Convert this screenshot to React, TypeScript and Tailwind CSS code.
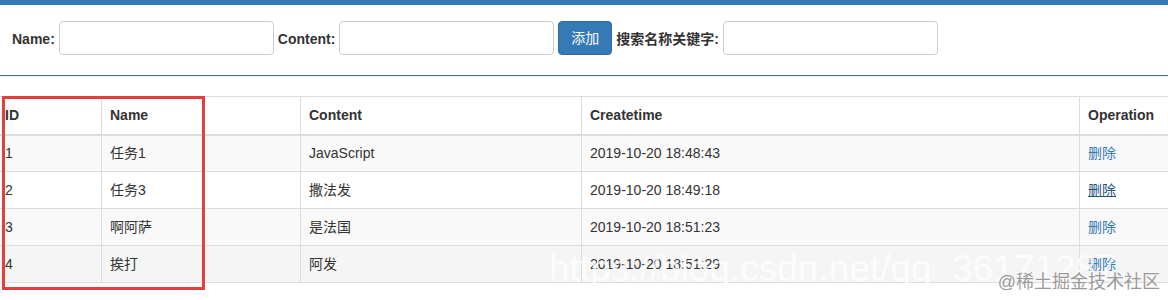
import React from 'react';

const rows = [
  { id: 1, name: '任务1', content: 'JavaScript', time: '2019-10-20 18:48:43', bg: 'bg-[#f9f9f9]' },
  { id: 2, name: '任务3', content: '撒法发', time: '2019-10-20 18:49:18', bg: 'bg-white', underline: true },
  { id: 3, name: '啊阿萨', content: '是法国', time: '2019-10-20 18:51:23', bg: 'bg-[#f9f9f9]' },
  { id: 4, name: '挨打', content: '阿发', time: '2019-10-20 18:51:29', bg: 'bg-[#f5f5f5]' },
];

const font = "font-['Liberation_Sans','Noto_Sans_CJK_SC',sans-serif]";

export default function App() {
  return (
    <div className={`relative h-[300px] w-[1168px] overflow-hidden bg-white text-[14px] text-[#333] ${font}`}>
      <div className="h-[5px] bg-[#337ab7]" />

      {/* form */}
      <div className="flex h-[71px] items-start gap-[4px] border-b border-[#3b6e9c] px-[12px] pt-[16px] shadow-[0_1px_2px_rgba(51,122,183,0.12)]">
        <label className="mt-[8px] font-bold">Name:</label>
        <input className="h-[34px] w-[215px] rounded-[4px] border border-[#ccc] px-3" />
        <label className="mt-[8px] font-bold">Content:</label>
        <input className="h-[34px] w-[215px] rounded-[4px] border border-[#ccc] px-3" />
        <button className="h-[34px] w-[54px] rounded-[4px] border border-[#2e6da4] bg-[#337ab7] text-white">添加</button>
        <label className="mt-[8px] font-bold">搜索名称关键字:</label>
        <input className="h-[34px] w-[215px] rounded-[4px] border border-[#ccc] px-3" />
      </div>

      {/* table */}
      <table className="ml-[-4px] mt-[20px] w-[1184px] table-fixed border-collapse">
        <colgroup>
          <col className="w-[105px]" />
          <col className="w-[199px]" />
          <col className="w-[281px]" />
          <col className="w-[498px]" />
          <col className="w-[101px]" />
        </colgroup>
        <thead>
          <tr>
            {['ID', 'Name', 'Content', 'Createtime', 'Operation'].map((h) => (
              <th
                key={h}
                className="h-[38px] border border-b-2 border-[#ddd] px-[8px] text-left font-bold"
              >
                {h}
              </th>
            ))}
          </tr>
        </thead>
        <tbody>
          {rows.map((r) => (
            <tr key={r.id} className={r.bg}>
              <td className="h-[37px] border border-[#ddd] px-[8px]">{r.id}</td>
              <td className="border border-[#ddd] px-[8px]">{r.name}</td>
              <td className="border border-[#ddd] px-[8px]">{r.content}</td>
              <td className="border border-[#ddd] px-[8px]">{r.time}</td>
              <td className="border border-[#ddd] px-[8px]">
                <a className={r.underline ? 'text-[#23527c] underline' : 'text-[#337ab7]'} href="#">
                  删除
                </a>
              </td>
            </tr>
          ))}
        </tbody>
      </table>

      {/* red highlight box */}
      <div className="pointer-events-none absolute left-[2px] top-[96px] h-[194px] w-[203px] border-[3px] border-[#e53e3e]" />

      {/* watermarks */}
      <div className="pointer-events-none absolute left-[549px] top-[250px] whitespace-nowrap text-[37px] font-['Liberation_Sans',sans-serif] leading-none text-white/75">
        https://blog.csdn.net/qq_36171287
      </div>
      <div className="pointer-events-none absolute right-[8px] top-[273px] text-[18px] leading-none text-[#9a9a9a] [text-shadow:0_0_2px_#fff]">
        @稀土掘金技术社区
      </div>
    </div>
  );
}
